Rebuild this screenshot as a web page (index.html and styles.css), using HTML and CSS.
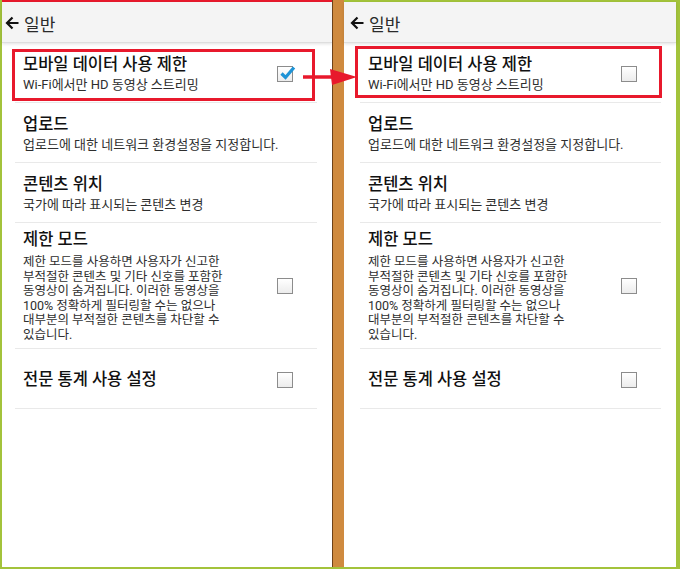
FILE: index.html
```html
<!DOCTYPE html>
<html lang="ko">

<head>
    <meta charset="UTF-8">
    <meta name="viewport" content="width=device-width, initial-scale=1.0">
    <title>일반 설정 비교</title>
    <link rel="stylesheet" href="styles.css">
</head>

<body>
    <div class="frame">
        <div class="panel panel-left">
            <div class="topbar">
                <svg class="back" width="14" height="14" viewBox="0 0 14 14">
                    <path d="M13.5 7H2M7.5 1.5L2 7 7.5 12.5" fill="none" stroke="#111" stroke-width="2.2" />
                </svg>
                <span class="topbar-title">일반</span>
            </div>
            <div class="list">
                <div class="row marked">
                    <div class="row-text">
                        <div class="row-title">모바일 데이터 사용 제한</div>
                        <div class="row-sub">Wi-Fi에서만 HD 동영상 스트리밍</div>
                    </div>
                    <span class="box checked">
                        <svg class="tick" width="17" height="16" viewBox="0 0 17 16">
                            <path d="M2.5 8.5L6.5 12.5 15 2.5" fill="none" stroke="#1e93d6" stroke-width="3.2" />
                        </svg>
                    </span>
                </div>
                <div class="row">
                    <div class="row-text">
                        <div class="row-title">업로드</div>
                        <div class="row-sub">업로드에 대한 네트워크 환경설정을 지정합니다.</div>
                    </div>
                </div>
                <div class="row">
                    <div class="row-text">
                        <div class="row-title">콘텐츠 위치</div>
                        <div class="row-sub">국가에 따라 표시되는 콘텐츠 변경</div>
                    </div>
                </div>
                <div class="row row-tall">
                    <div class="row-text">
                        <div class="row-title">제한 모드</div>
                        <div class="row-desc">제한 모드를 사용하면 사용자가 신고한<br>부적절한 콘텐츠 및 기타 신호를 포함한<br>동영상이 숨겨집니다. 이러한 동영상을<br>100% 정확하게 필터링할 수는 없으나<br>대부분의 부적절한 콘텐츠를 차단할 수<br>있습니다.</div>
                    </div>
                    <span class="box"></span>
                </div>
                <div class="row row-single">
                    <div class="row-text">
                        <div class="row-title">전문 통계 사용 설정</div>
                    </div>
                    <span class="box"></span>
                </div>
            </div>
        </div>

        <div class="divider"></div>

        <div class="panel panel-right">
            <div class="topbar">
                <svg class="back" width="14" height="14" viewBox="0 0 14 14">
                    <path d="M13.5 7H2M7.5 1.5L2 7 7.5 12.5" fill="none" stroke="#111" stroke-width="2.2" />
                </svg>
                <span class="topbar-title">일반</span>
            </div>
            <div class="list">
                <div class="row marked">
                    <div class="row-text">
                        <div class="row-title">모바일 데이터 사용 제한</div>
                        <div class="row-sub">Wi-Fi에서만 HD 동영상 스트리밍</div>
                    </div>
                    <span class="box"></span>
                </div>
                <div class="row">
                    <div class="row-text">
                        <div class="row-title">업로드</div>
                        <div class="row-sub">업로드에 대한 네트워크 환경설정을 지정합니다.</div>
                    </div>
                </div>
                <div class="row">
                    <div class="row-text">
                        <div class="row-title">콘텐츠 위치</div>
                        <div class="row-sub">국가에 따라 표시되는 콘텐츠 변경</div>
                    </div>
                </div>
                <div class="row row-tall">
                    <div class="row-text">
                        <div class="row-title">제한 모드</div>
                        <div class="row-desc">제한 모드를 사용하면 사용자가 신고한<br>부적절한 콘텐츠 및 기타 신호를 포함한<br>동영상이 숨겨집니다. 이러한 동영상을<br>100% 정확하게 필터링할 수는 없으나<br>대부분의 부적절한 콘텐츠를 차단할 수<br>있습니다.</div>
                    </div>
                    <span class="box"></span>
                </div>
                <div class="row row-single">
                    <div class="row-text">
                        <div class="row-title">전문 통계 사용 설정</div>
                    </div>
                    <span class="box"></span>
                </div>
            </div>
        </div>
    </div>

    <svg class="pointer" width="62" height="30" viewBox="0 0 62 30">
        <path d="M3 17H33" stroke="#e8192c" stroke-width="3.5" />
        <polygon points="30,9 57,17 32,25" fill="#e8192c" />
    </svg>
</body>

</html>
```

FILE: styles.css
```css
body {
    margin: 0;
    background-color: #a3c33b;
    font-family: Roboto, "Noto Sans CJK KR", sans-serif;
    color: #151515;
}

.frame {
    display: flex;
    width: 680px;
    height: 569px;
    padding: 0 4px 2px 2px;
    box-sizing: border-box;
}

.panel {
    background-color: #fff;
    border-top: 2px solid #a3c33b;
}

.panel-left {
    width: 330px;
    border-top-color: #e8192c;
}

.panel-right {
    flex: 1;
}

.divider {
    width: 11px;
    background-color: #cf8a3f;
    border-left: 1px solid #6e4219;
}

.topbar {
    display: flex;
    align-items: center;
    height: 41px;
    padding: 2px 0 0 3px;
    box-sizing: border-box;
    background-color: #f4f4f4;
    border-bottom: 1px solid #dedede;
    box-shadow: 0 1px 3px rgba(0, 0, 0, 0.12);
}

.panel-right .topbar {
    padding-left: 6px;
}

.topbar-title {
    margin-left: 5px;
    font-size: 17px;
    color: #2a2a2a;
}

.list {
    margin: 0 15px 0 13px;
}

.panel-right .list {
    margin: 0 15px 0 16px;
}

.row {
    position: relative;
    display: flex;
    align-items: center;
    padding: 11px 24px 9px 8px;
    border-bottom: 1px solid #e9e9e9;
}

.row.marked::after {
    content: "";
    position: absolute;
    top: 6px;
    right: 2px;
    bottom: 1px;
    left: -3px;
    border: 3px solid #e8192c;
}

.panel-right .row.marked::after {
    top: 3px;
    right: -1px;
    bottom: 4px;
    left: -5px;
}

.row-tall {
    padding-top: 6px;
    padding-bottom: 5px;
}

.row-single {
    height: 60px;
    padding-top: 4px;
    padding-bottom: 0;
    box-sizing: border-box;
}

.row-text {
    flex: 1;
}

.row-title {
    font-size: 16.5px;
    font-weight: 500;
    line-height: 22px;
    color: #111;
}

.row-sub {
    font-size: 13px;
    line-height: 17px;
    color: #2e2e2e;
}

.row-desc {
    margin-top: 4px;
    font-size: 12.5px;
    line-height: 14.6px;
    color: #2e2e2e;
}

.box {
    position: relative;
    width: 14px;
    height: 14px;
    border: 1px solid #8c8c8c;
    background: linear-gradient(#fff, #ececec);
}

.tick {
    position: absolute;
    top: -2px;
    left: 1px;
    overflow: visible;
}

.pointer {
    position: absolute;
    left: 300px;
    top: 60px;
}
```
